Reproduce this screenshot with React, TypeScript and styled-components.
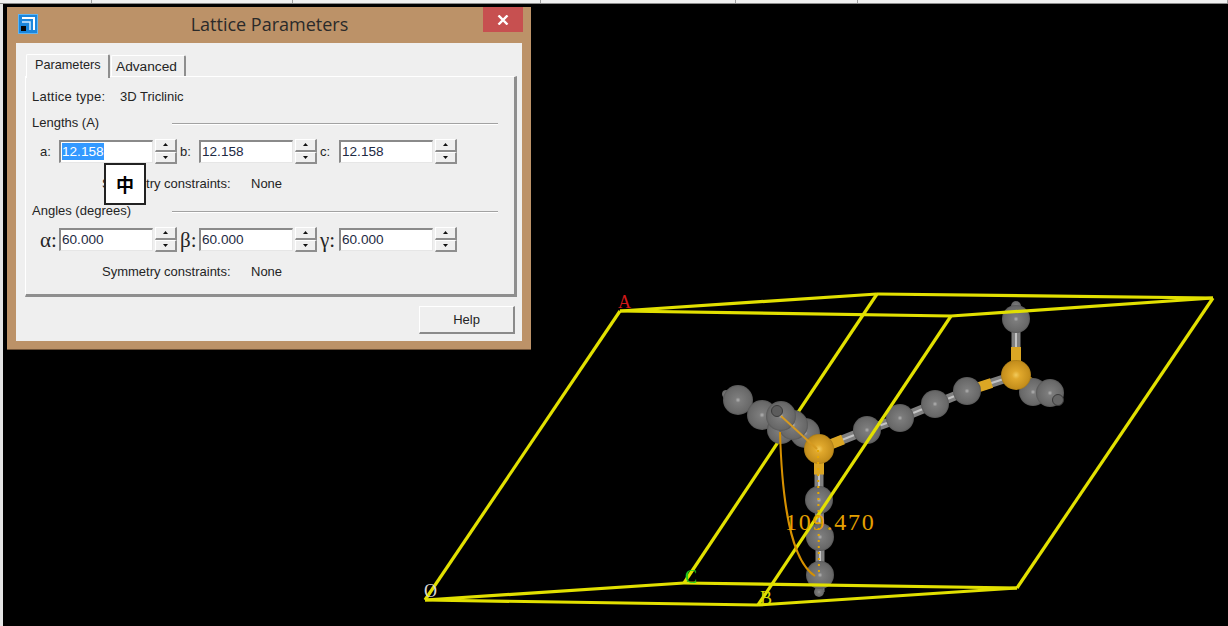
import React from "react";
import styled, { createGlobalStyle } from "styled-components";

const GlobalStyle = createGlobalStyle`
  html, body {
    margin: 0;
    padding: 0;
    background: #000;
  }
  body {
    font-family: "Liberation Sans", Arial, sans-serif;
  }
`;

const edgesBehind = [
  [684, 583, 877, 294],
];

const edgesFront = [
  [425, 600, 620, 311],
  [620, 311, 877, 294],
  [877, 294, 1213, 298],
  [1213, 298, 951, 316],
  [951, 316, 620, 311],
  [425, 600, 684, 583],
  [684, 583, 1017, 588],
  [1017, 588, 758, 605],
  [758, 605, 425, 600],
  [1017, 588, 1213, 298],
  [758, 605, 951, 316],
];

// bonds are drawn half gold from the phosphorus end
const bonds = [
  [819, 449, 867, 430, 1],
  [867, 430, 901, 418, 0],
  [901, 418, 935, 404, 0],
  [935, 404, 967, 391, 0],
  [967, 391, 1016, 375, 1],
  [1016, 375, 1016, 319, 1],
  [1016, 319, 1016, 306, 0],
  [1016, 375, 1050, 393, 1],
  [1050, 393, 1059, 400, 0],
  [819, 449, 819, 500, 1],
  [819, 500, 820, 537, 0],
  [820, 537, 820, 575, 0],
  [820, 575, 820, 592, 0],
  [738, 400, 725, 394, 0],
  [738, 400, 762, 415, 0],
  [819, 449, 780, 416, 1],
];

const grayAtoms = [
  [726, 394, 4],
  [738, 400, 15],
  [762, 415, 15],
  [781, 430, 14],
  [805, 433, 15],
  [793, 425, 15],
  [781, 416, 15],
  [867, 430, 14],
  [900, 418, 14],
  [935, 404, 14],
  [967, 391, 14],
  [1016, 306, 5],
  [1016, 319, 14],
  [1033, 392, 14],
  [1050, 393, 14],
  [819, 592, 5],
  [819, 500, 14],
  [820, 537, 14],
  [820, 575, 14],
];

const goldAtoms = [
  [819, 449, 15],
  [1016, 375, 15],
];

const lengths = [
  { label: "a:", value: "12.158", selected: true },
  { label: "b:", value: "12.158" },
  { label: "c:", value: "12.158" },
];

const angles = [
  { label: "α:", value: "60.000" },
  { label: "β:", value: "60.000" },
  { label: "γ:", value: "60.000" },
];

type FieldItem = { label: string; value: string; selected?: boolean };

const FieldGroup: React.FC<{ item: FieldItem; $greek?: boolean }> = ({ item, $greek }) => (
  <Group>
    <FieldLabel $greek={$greek}>{item.label}</FieldLabel>
    <Field>{item.selected ? <Selected>{item.value}</Selected> : item.value}</Field>
    <Spinner>
      <SpinButton>
        <svg width="5" height="3" viewBox="0 0 5 3">
          <path d="M2.5 0L5 3H0z" fill="#111" />
        </svg>
      </SpinButton>
      <SpinButton>
        <svg width="5" height="3" viewBox="0 0 5 3">
          <path d="M0 0H5L2.5 3z" fill="#111" />
        </svg>
      </SpinButton>
    </Spinner>
  </Group>
);

const App: React.FC = () => {
  return (
    <Desktop>
      <GlobalStyle />
      <TopStrip>
        <StripCell $width={92} />
        <StripCell $width={201} />
        <StripCell $width={248} />
        <StripCell $width={195} />
        <StripCell $width={122} />
        <StripCell $width={370} />
      </TopStrip>
      <Stage>
        <Scene viewBox="0 0 1228 626" width="1228" height="626">
          <defs>
            <radialGradient id="gray" cx="0.5" cy="0.5" r="0.55">
              <stop offset="0" stopColor="#b4b4b4" />
              <stop offset="0.16" stopColor="#7c7c7c" />
              <stop offset="0.8" stopColor="#686868" />
              <stop offset="1" stopColor="#484848" />
            </radialGradient>
            <radialGradient id="gold" cx="0.5" cy="0.5" r="0.55">
              <stop offset="0" stopColor="#f2cb5c" />
              <stop offset="0.25" stopColor="#e0a82c" />
              <stop offset="0.82" stopColor="#c48e1c" />
              <stop offset="1" stopColor="#8a6612" />
            </radialGradient>
          </defs>
          {edgesBehind.map(([x1, y1, x2, y2], i) => (
            <line key={i} x1={x1} y1={y1} x2={x2} y2={y2} stroke="#e2e000" strokeWidth="3.2" />
          ))}
          {bonds.map(([x1, y1, x2, y2, gold], i) => {
            const mx = (x1 + x2) / 2;
            const my = (y1 + y2) / 2;
            return (
              <g key={i}>
                <line x1={x1} y1={y1} x2={x2} y2={y2} stroke="#808080" strokeWidth="9" />
                <line x1={x1} y1={y1} x2={x2} y2={y2} stroke="#c4c4c4" strokeWidth="2" />
                {gold ? <line x1={x1} y1={y1} x2={mx} y2={my} stroke="#dba624" strokeWidth="10" /> : null}
              </g>
            );
          })}
          {grayAtoms.map(([cx, cy, r], i) => (
            <circle key={i} cx={cx} cy={cy} r={r} fill="url(#gray)" />
          ))}
          {goldAtoms.map(([cx, cy, r], i) => (
            <circle key={i} cx={cx} cy={cy} r={r} fill="url(#gold)" />
          ))}
          <circle cx="777" cy="411" r="5.5" fill="#5c5c5c" stroke="#3a3a3a" />
          <circle cx="1058" cy="400" r="5.5" fill="#666" stroke="#3a3a3a" />
          {edgesFront.map(([x1, y1, x2, y2], i) => (
            <line key={i} x1={x1} y1={y1} x2={x2} y2={y2} stroke="#e2e000" strokeWidth="3.2" />
          ))}
          <line x1="781" y1="416" x2="817" y2="449" stroke="#d69a20" strokeWidth="2" />
          <line x1="818" y1="450" x2="819" y2="576" stroke="#e8a800" strokeWidth="2" strokeDasharray="2 4" />
          <path d="M780 432C782 500 790 560 815 576" fill="none" stroke="#d69000" strokeWidth="2" />
          <AngleText x="785" y="530">109.470</AngleText>
          <AxisText x="618" y="308" fill="#d01818">A</AxisText>
          <AxisText x="424" y="597" fill="#d8d8d8">O</AxisText>
          <AxisText x="685" y="583" fill="#20d020">C</AxisText>
          <AxisText x="760" y="604" fill="#d8d800">B</AxisText>
        </Scene>
        <Window>
          <TitleBar>
            <TitleIcon>
              <svg width="20" height="20" viewBox="0 0 20 20">
                <rect x="0.5" y="0.5" width="19" height="19" fill="#1b86dc" stroke="#5fb4f2" />
                <path d="M4 4H16V16" fill="none" stroke="#fff" strokeWidth="2" />
                <path d="M4 8H12V16" fill="none" stroke="#cfe8fb" strokeWidth="1.5" />
                <rect x="3" y="12" width="5" height="5" fill="#050505" />
              </svg>
            </TitleIcon>
            <Title>Lattice Parameters</Title>
            <CloseButton>
              <svg width="12" height="10" viewBox="0 0 12 10">
                <path d="M1.5 0.5L10.5 9.5M10.5 0.5L1.5 9.5" stroke="#fff" strokeWidth="2.4" />
              </svg>
            </CloseButton>
          </TitleBar>
          <Body>
            <TabRow>
              <Tab $active>Parameters</Tab>
              <Tab>Advanced</Tab>
            </TabRow>
            <Panel>
              <TypeRow>
                <TypeLabel>Lattice type:</TypeLabel>
                <span>3D Triclinic</span>
              </TypeRow>
              <Heading $top={6}>
                <HeadingLabel>Lengths (A)</HeadingLabel>
                <Rule />
              </Heading>
              <FieldRow>
                {lengths.map((item) => (
                  <FieldGroup key={item.label} item={item} />
                ))}
              </FieldRow>
              <Note>
                <NoteLabel>Symmetry constraints:</NoteLabel>
                <span>None</span>
              </Note>
              <Heading $top={11}>
                <HeadingLabel>Angles (degrees)</HeadingLabel>
                <Rule />
              </Heading>
              <FieldRow>
                {angles.map((item) => (
                  <FieldGroup key={item.label} item={item} $greek />
                ))}
              </FieldRow>
              <Note>
                <NoteLabel>Symmetry constraints:</NoteLabel>
                <span>None</span>
              </Note>
            </Panel>
            <Footer>
              <HelpButton>Help</HelpButton>
            </Footer>
            <ImeBadge>中</ImeBadge>
          </Body>
        </Window>
      </Stage>
    </Desktop>
  );
};

export default App;

const Desktop = styled.div`
  width: 1228px;
  height: 626px;
  overflow: hidden;
  background: #000;
  display: flex;
  flex-direction: column;
`;

const TopStrip = styled.div`
  display: flex;
  flex: none;
  height: 4px;
  background: #8c8c8c;
  padding-bottom: 1px;
  box-sizing: border-box;
`;

const StripCell = styled.div<{ $width: number }>`
  width: ${(p) => p.$width}px;
  box-sizing: border-box;
  background: #f0f0f0;
  border-right: 1px solid #a0a0a0;
`;

const Stage = styled.div`
  position: relative;
  flex: 1;
  border-left: 3px solid #e4e4e4;
`;

const Scene = styled.svg`
  position: absolute;
  left: -3px;
  top: -4px;
`;

const AngleText = styled.text`
  font-family: "Liberation Serif", serif;
  font-size: 24px;
  letter-spacing: 1.8px;
  fill: #e6a000;
`;

const AxisText = styled.text`
  font-family: "Liberation Serif", serif;
  font-size: 18px;
  font-weight: 400;
`;

const Window = styled.div`
  position: absolute;
  left: 4px;
  top: 3px;
  width: 524px;
  box-sizing: border-box;
  background: #bc9268;
  padding: 0 9px 8px;
  box-shadow: 0 1px 0 #6e5238;
`;

const TitleBar = styled.div`
  display: grid;
  grid-template-columns: 1fr auto 1fr;
  height: 36px;
  margin-right: -1px;
  color: #2a2a2a;
`;

const TitleIcon = styled.div`
  display: flex;
  align-items: center;
  padding: 0 0 0 2px;
  height: 34px;
`;

const Title = styled.div`
  font-family: "Open Sans", "Liberation Sans", sans-serif;
  font-size: 18px;
  line-height: 35px;
`;

const CloseButton = styled.div`
  justify-self: end;
  width: 40px;
  height: 25px;
  background: #c75050;
  display: flex;
  align-items: center;
  justify-content: center;
`;

const Body = styled.div`
  position: relative;
  background: #efefef;
  padding: 10px 0 0 9px;
  font-size: 13px;
  color: #242424;
`;

const TabRow = styled.div`
  display: flex;
  align-items: flex-end;
  height: 23px;
  padding-left: 1px;
`;

const Tab = styled.div<{ $active?: boolean }>`
  box-sizing: border-box;
  height: ${(p) => (p.$active ? "24px" : "21px")};
  width: ${(p) => (p.$active ? "84px" : "75px")};
  margin-right: ${(p) => (p.$active ? "1px" : "0")};
  padding-left: ${(p) => (p.$active ? "8px" : "4px")};
  line-height: ${(p) => (p.$active ? "20px" : "22px")};
  background: #efefef;
  border-top: 1px solid #fff;
  border-left: 1px solid #fff;
  border-right: 2px solid #8e8e8e;
  border-radius: 2px 2px 0 0;
  position: relative;
  z-index: ${(p) => (p.$active ? 1 : 0)};
  margin-bottom: ${(p) => (p.$active ? "-2px" : "0")};
  font-size: ${(p) => (p.$active ? "12.7px" : "13.7px")};
`;

const Panel = styled.div`
  box-sizing: border-box;
  width: 492px;
  height: 221px;
  padding: 8px 0 0 6px;
  border-top: 1px solid #fff;
  border-left: 1px solid #fff;
  border-right: 3px solid #8e8e8e;
  border-bottom: 3px solid #8e8e8e;
  display: flex;
  flex-direction: column;
`;

const TypeRow = styled.div`
  box-sizing: border-box;
  display: flex;
  flex: none;
  height: 24px;
  padding-bottom: 2px;
  align-items: center;
`;

const TypeLabel = styled.span`
  width: 88px;
  letter-spacing: 0.25px;
`;

const Heading = styled.div<{ $top: number }>`
  display: flex;
  flex: none;
  align-items: center;
  height: 16px;
  margin-top: ${(p) => p.$top}px;
`;

const HeadingLabel = styled.div`
  width: 140px;
  white-space: nowrap;
  margin-top: -1px;
`;

const Rule = styled.div`
  width: 326px;
  height: 1px;
  background: #a2a2a2;
  box-shadow: 0 1px 0 #fff;
`;

const FieldRow = styled.div`
  display: flex;
  flex: none;
  gap: 3px;
  height: 23px;
  margin-top: 9px;
  padding-left: 8px;
`;

const Group = styled.div`
  display: flex;
  align-items: center;
`;

const FieldLabel = styled.div<{ $greek?: boolean }>`
  width: 19px;
  white-space: nowrap;
  font-family: ${(p) => (p.$greek ? '"Liberation Serif", serif' : "inherit")};
  font-size: ${(p) => (p.$greek ? "21px" : "13px")};
  margin-top: ${(p) => (p.$greek ? "2px" : "0")};
`;

const Field = styled.div`
  box-sizing: border-box;
  width: 94px;
  height: 23px;
  background: #fff;
  border-top: 2px solid #8a8a8a;
  border-left: 2px solid #8a8a8a;
  border-right: 1px solid #e6e6e6;
  border-bottom: 1px solid #e6e6e6;
  padding-left: 1px;
  font-size: 13.6px;
  line-height: 20px;
  color: #1e2a44;
`;

const Selected = styled.span`
  background: #3399ff;
  color: #fff;
  display: inline-block;
  line-height: 17px;
`;

const Spinner = styled.div`
  display: flex;
  flex-direction: column;
  width: 22px;
  height: 25px;
  margin-left: 2px;
`;

const SpinButton = styled.div`
  box-sizing: border-box;
  flex: 1;
  background: #efefef;
  border-top: 1px solid #fff;
  border-left: 1px solid #fff;
  border-right: 2px solid #8e8e8e;
  border-bottom: 2px solid #8e8e8e;
  display: flex;
  align-items: center;
  justify-content: center;
`;

const Note = styled.div`
  box-sizing: border-box;
  display: flex;
  flex: none;
  align-items: center;
  height: 16px;
  margin-top: 13px;
  padding: 0 0 2px 70px;
`;

const NoteLabel = styled.span`
  width: 149px;
`;

const Footer = styled.div`
  display: flex;
  justify-content: flex-end;
  padding: 9px 7px 7px 0;
`;

const HelpButton = styled.div`
  box-sizing: border-box;
  width: 96px;
  height: 28px;
  background: #efefef;
  border-top: 1px solid #fff;
  border-left: 1px solid #fff;
  border-right: 2px solid #8a8a8a;
  border-bottom: 2px solid #8a8a8a;
  text-align: center;
  line-height: 26px;
  font-size: 13px;
`;

const ImeBadge = styled.div`
  position: absolute;
  left: 88px;
  top: 120px;
  box-sizing: border-box;
  width: 42px;
  height: 42px;
  background: #fff;
  border: 2px solid #222;
  color: #000;
  font-family: "Noto Sans CJK SC", sans-serif;
  font-weight: 700;
  font-size: 18px;
  line-height: 38px;
  text-align: center;
`;
